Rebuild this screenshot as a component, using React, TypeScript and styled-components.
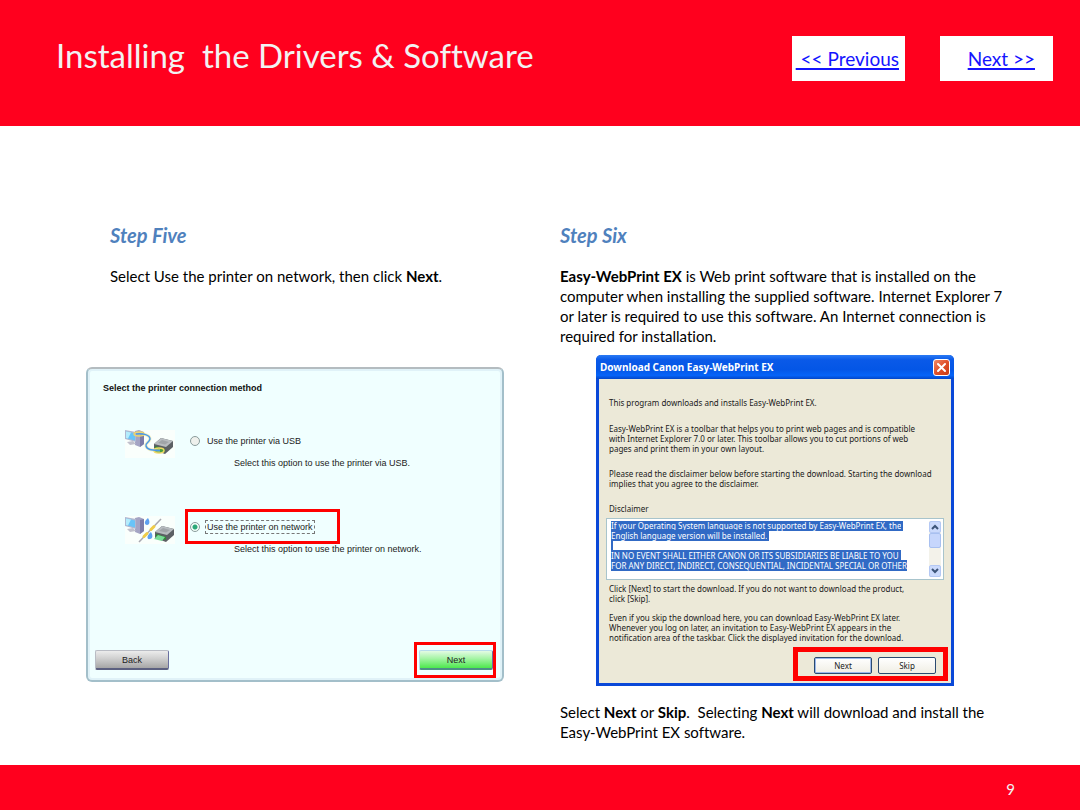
import React, { useEffect, useRef } from "react";
import styled, { createGlobalStyle } from "styled-components";

const Global = createGlobalStyle`
  *, *::before, *::after { box-sizing: border-box; }
  body { margin: 0; background: #fff; }
  h1, h2, h3, p { margin: 0; }
`;

const red = "#ff001e";
const slideFont = `Lato, "Open Sans", sans-serif`;
const wizardFont = `"Liberation Sans", Arial, sans-serif`;
const windowFont = `Tahoma, "Noto Sans", "DejaVu Sans Condensed", sans-serif`;

const Page = styled.div`
  display: flex;
  flex-direction: column;
  min-height: 100vh;
  font-family: ${slideFont};
  font-variant-ligatures: none;
  font-size: 15px;
  line-height: 20px;
  color: #000;
`;

const Header = styled.header`
  display: flex;
  align-items: flex-start;
  min-height: 126px;
  padding: 36px 27px 0 56px;
  background: ${red};
`;

const Title = styled.h1`
  flex: 1;
  font-size: 33px;
  line-height: 38px;
  font-weight: 400;
  white-space: pre;
  color: #f2f2f2;
`;

const Nav = styled.nav`
  display: flex;
  gap: 35px;
`;

const NavLink = styled.a<{ $inset: number }>`
  width: 113px;
  padding: 11px ${(p) => p.$inset}px 10px 0;
  background: #fff;
  color: #1414ff;
  font-size: 19px;
  line-height: 24px;
  text-align: right;
  white-space: pre;
  text-decoration-thickness: 2px;
  text-underline-offset: 2px;
`;

const Main = styled.main`
  flex: 1;
  display: grid;
  grid-template-columns: 1fr 1fr;
  gap: 10px;
  padding: 97px 56px 22px 86px;
`;

const Step = styled.section<{ $indent?: number }>`
  & > h2, & > p { padding-left: ${(p) => p.$indent ?? 0}px; }
`;

const StepTitle = styled.h2`
  margin-bottom: 19px;
  font-size: 20px;
  line-height: 24px;
  font-weight: 700;
  font-style: italic;
  color: #4f81bd;
`;

const Copy = styled.p`
  white-space: pre-line;
`;

const Caption = styled(Copy)`
  margin-top: 16px;
`;

/* Printer set-up wizard */

const Wizard = styled.form`
  display: flex;
  flex-direction: column;
  max-width: 418px;
  min-height: 315px;
  margin-top: 81px;
  padding: 13px 6px 2px 7px;
  border: 2px solid #a3bfca;
  border-top-color: #b4bcc0;
  border-radius: 6px;
  background: #f0ffff;
  box-shadow: inset 0 0 0 2px #e0f2f8;
  font-family: ${wizardFont};
  font-size: 9px;
  line-height: 12px;
  color: #222;
`;

const WizardTitle = styled.h3`
  margin: 0 0 29px 8px;
  font-size: 9px;
  line-height: 12px;
  font-weight: 700;
  color: #111;
`;

const Option = styled.div`
  display: grid;
  grid-template-columns: 50px 1fr;
  column-gap: 10px;
  margin: 0 0 40px 30px;
  & > svg { align-self: end; }
`;

const Choice = styled.label<{ $marked?: boolean }>`
  display: flex;
  align-items: center;
  gap: 5px;
  justify-self: start;
  min-width: 155px;
  height: 35px;
  padding: 0 2px;
  border: 3px solid ${(p) => (p.$marked ? "#ff0000" : "transparent")};
`;

const ChoiceText = styled.span<{ $focused?: boolean }>`
  padding: 0 1px;
  border: 1px dashed ${(p) => (p.$focused ? "#777" : "transparent")};
`;

const Radio = styled.input`
  appearance: none;
  width: 10px;
  height: 10px;
  margin: 0;
  border: 1px solid #8a9c9c;
  border-radius: 50%;
  background: #eef0ec;
  &:checked {
    background: radial-gradient(circle, #2aa878 0 2px, #f4fffa 3px);
  }
`;

const Hint = styled.p`
  grid-column: 2;
  margin: -1px 0 0 49px;
`;

const WizardActions = styled.div`
  display: flex;
  align-items: center;
  justify-content: space-between;
  margin-top: auto;
`;

const WizardButton = styled.button<{ $green?: boolean }>`
  display: block;
  width: 74px;
  height: 20px;
  padding: 0;
  border: 1px solid ${(p) => (p.$green ? "#b8dcec" : "#b9bcc4")};
  border-right-color: #6a6fa0;
  border-bottom: 2px solid ${(p) => (p.$green ? "#4c8f86" : "#5c6080")};
  border-radius: 2px;
  background: ${(p) =>
    p.$green
      ? "linear-gradient(#e4fbe4, #a4f4a4 45%, #4de84d)"
      : "linear-gradient(#ececec, #cfcfcf 45%, #a6a6a6)"};
  font: 9px/12px ${wizardFont};
  color: #222;
`;

const NextMark = styled.div`
  padding: 5px 0 5px 2px;
  border: 3px solid #ff0000;
`;

/* Download window */

const Window = styled.section`
  max-width: 358px;
  margin: 9px 0 0 36px;
  border: solid #0a48d8;
  border-width: 0 3px 3px;
  border-radius: 5px 5px 0 0;
  background: #ece9d8;
  font-family: ${windowFont};
  font-size: 8px;
  line-height: 10px;
  color: #1a1a1a;
`;

const TitleBar = styled.header`
  display: flex;
  align-items: center;
  justify-content: space-between;
  height: 24px;
  margin: 0 -3px;
  padding: 0 4px;
  border-radius: 5px 5px 0 0;
  background: linear-gradient(#2a7af4, #0a5ae8 20%, #0456e6 60%, #0664f8 85%, #0346c8);
`;

const WindowTitle = styled.h3`
  font-size: 10px;
  line-height: 16px;
  font-weight: 700;
  color: #fff;
`;

const CloseButton = styled.button`
  display: grid;
  place-items: center;
  width: 17px;
  height: 17px;
  padding: 0;
  border: 1px solid #fff;
  border-radius: 3px;
  background: linear-gradient(135deg, #f08a68, #e0502a 50%, #c83c14);
`;

const WindowBody = styled.div`
  padding: 19px 7px 2px;
`;

const Note = styled.p<{ $gap: number }>`
  margin: 0 0 ${(p) => p.$gap}px 3px;
  white-space: pre;
`;

const DisclaimerLabel = styled.label`
  display: block;
  margin: 0 0 4px 3px;
`;

const DisclaimerBox = styled.div`
  display: flex;
  height: 62px;
  margin-bottom: 4px;
  padding: 2px;
  border: 1px solid #a8c4cc;
  background: #fff;
`;

const DisclaimerText = styled.textarea`
  flex: 1;
  min-width: 0;
  padding: 0 0 0 2px;
  border: 0;
  outline: 0;
  resize: none;
  overflow: hidden;
  background: transparent;
  font: 8px/10px ${windowFont};
  color: #1a1a1a;
  &::selection { background: #316ac5; color: #fff; }
`;

const ScrollBar = styled.div`
  display: flex;
  flex-direction: column;
  width: 12px;
  background: #f3f2ea;
`;

const ScrollButton = styled.button`
  display: grid;
  place-items: center;
  height: 12px;
  padding: 0;
  border: 1px solid #b4c8f4;
  border-radius: 2px;
  background: #cbdafc;
`;

const ScrollThumb = styled.div`
  height: 15px;
  margin-bottom: auto;
  border: 1px solid #a8c0f0;
  border-radius: 2px;
  background: #c6d6fc;
`;

const ActionMark = styled.div`
  display: flex;
  gap: 6px;
  width: 155px;
  margin: 4px -4px 0 auto;
  padding: 5px 7px 2px 16px;
  border: 5px solid #ff0000;
`;

const WindowButton = styled.button<{ $default?: boolean }>`
  width: 58px;
  height: 17px;
  padding: 0;
  border: 1px solid #2a4a70;
  border-radius: 2px;
  background: linear-gradient(#fff, #f0eee4);
  box-shadow: ${(p) => (p.$default ? "inset 0 0 0 1px #9ab8ec" : "none")};
  font: 8px/10px ${windowFont};
  color: #1a1a1a;
`;

function Computer() {
  return (
    <>
      <path d="M10 1 L14 0 L19 2 V14 L15 17 L10 15 Z" fill="#a4a4c4" />
      <path d="M15 3 L19 2 V14 L15 17 Z" fill="#7c7ca8" />
      <path d="M0 0 L11 2 V12 L0 9 Z" fill="#b0b8d0" />
      <path d="M1 1.5 L10 3.5 V10.5 L1 8 Z" fill="#68c4f8" />
      <path d="M1 1.5 L6 2.5 L3 8.5 L1 8 Z" fill="#b4ecfc" />
      <path d="M2 12 L8 11 L11 14 L5 15 Z" fill="#c0c0cc" />
    </>
  );
}

function Printer() {
  return (
    <>
      <path d="M29 14 L36 8 L48 11 V17 L40 24 L29 20 Z" fill="#5c6064" />
      <path d="M29 14 L36 8 L48 11 L41 17 Z" fill="#b8bcc0" />
      <path d="M33 13 L37 10 L44 12 L40 14.500 Z" fill="#a0a4a8" />
      <path d="M30 16 L40 19 V22 L30 18.500 Z" fill="#2c8c34" />
    </>
  );
}

function UsbPicture() {
  return (
    <svg width="50" height="28" viewBox="0 0 50 28" aria-hidden="true">
      <rect width="50" height="28" fill="#fafffc" />
      <Computer />
      <ellipse cx="14" cy="4" rx="5" ry="2" fill="none" stroke="#f0d468" strokeWidth="1.500" />
      <Printer />
      <ellipse cx="34" cy="20.500" rx="5" ry="2.500" fill="#48a040" stroke="#f0d868" strokeWidth="1.500" />
      <path d="M11 4 C18 3 25 5 25 9 C24 13 20 13 21 16 C22 20 27 20 35 20.500" fill="none" stroke="#f0e088" strokeWidth="3" opacity="0.500" />
      <path d="M11 4 C18 3 25 5 25 9 C24 13 20 13 21 16 C22 20 27 20 35 20.500" fill="none" stroke="#4a9ae8" strokeWidth="1.500" />
    </svg>
  );
}

function NetworkPicture() {
  return (
    <svg width="50" height="28" viewBox="0 0 50 28" aria-hidden="true">
      <rect width="50" height="28" fill="#fafffc" />
      <g transform="translate(0 1)">
        <Computer />
      </g>
      <path d="M36 3 L14 26" stroke="#a8a8b0" strokeWidth="1.500" />
      <path d="M29 10.500 L26 13.500 M22 17.500 L19 20.500" stroke="#f0cc48" strokeWidth="3" strokeLinecap="round" />
      <path d="M23 2 C18 6 20 9 22 9 C25 9 25 5 23 2 Z" fill="#5ca0f0" />
      <path d="M26 16 C21 20 22 24 25 23 C28 23 28 19 26 16 Z" fill="#5ca0f0" />
      <g transform="translate(1 2)">
        <Printer />
        <path d="M28 21 L32 17 L39 19 L36 23 Z" fill="#78dc98" />
      </g>
    </svg>
  );
}

const disclaimer = [
  "If your Operating System language is not supported by Easy-WebPrint EX, the",
  "English language version will be installed.",
  "",
  "IN NO EVENT SHALL EITHER CANON OR ITS SUBSIDIARIES BE LIABLE TO YOU",
  "FOR ANY DIRECT, INDIRECT, CONSEQUENTIAL, INCIDENTAL SPECIAL OR OTHER",
].join("\n");

const Foot = styled.footer`
  display: flex;
  justify-content: flex-end;
  min-height: 45px;
  padding: 14px 65px 0 0;
  background: ${red};
  color: #f2f2f2;
  font-size: 15px;
`;

function PrinterWizard() {
  return (
    <Wizard onSubmit={(e) => e.preventDefault()}>
      <WizardTitle>Select the printer connection method</WizardTitle>
      <Option>
        <UsbPicture />
        <Choice>
          <Radio type="radio" name="connection" value="usb" />
          <ChoiceText>Use the printer via USB</ChoiceText>
        </Choice>
        <Hint>Select this option to use the printer via USB.</Hint>
      </Option>
      <Option>
        <NetworkPicture />
        <Choice $marked>
          <Radio type="radio" name="connection" value="network" defaultChecked />
          <ChoiceText $focused>Use the printer on network</ChoiceText>
        </Choice>
        <Hint>Select this option to use the printer on network.</Hint>
      </Option>
      <WizardActions>
        <WizardButton type="button">Back</WizardButton>
        <NextMark>
          <WizardButton type="submit" $green>Next</WizardButton>
        </NextMark>
      </WizardActions>
    </Wizard>
  );
}

function DownloadWindow() {
  const text = useRef<HTMLTextAreaElement>(null);
  useEffect(() => {
    text.current?.focus({ preventScroll: true });
    text.current?.select();
  }, []);

  return (
    <Window>
      <TitleBar>
        <WindowTitle>Download Canon Easy-WebPrint EX</WindowTitle>
        <CloseButton type="button" aria-label="Close">
          <svg width="11" height="11" viewBox="0 0 11 11" aria-hidden="true">
            <path d="M2 2 L9 9 M9 2 L2 9" stroke="#fff" strokeWidth="2" strokeLinecap="round" />
          </svg>
        </CloseButton>
      </TitleBar>
      <WindowBody>
        <Note $gap={16}>This program downloads and installs Easy-WebPrint EX.</Note>
        <Note $gap={15}>
          {"Easy-WebPrint EX is a toolbar that helps you to print web pages and is compatible\nwith Internet Explorer 7.0 or later. This toolbar allows you to cut portions of web\npages and print them in your own layout."}
        </Note>
        <Note $gap={15}>
          {"Please read the disclaimer below before starting the download. Starting the download\nimplies that you agree to the disclaimer."}
        </Note>
        <DisclaimerLabel htmlFor="disclaimer">Disclaimer</DisclaimerLabel>
        <DisclaimerBox>
          <DisclaimerText id="disclaimer" ref={text} readOnly wrap="off" value={disclaimer} />
          <ScrollBar>
            <ScrollButton type="button" aria-label="Scroll up">
              <svg width="8" height="6" viewBox="0 0 8 6" aria-hidden="true">
                <path d="M1 5 L4 2 L7 5" fill="none" stroke="#3c5478" strokeWidth="2" />
              </svg>
            </ScrollButton>
            <ScrollThumb />
            <ScrollButton type="button" aria-label="Scroll down">
              <svg width="8" height="6" viewBox="0 0 8 6" aria-hidden="true">
                <path d="M1 1 L4 4 L7 1" fill="none" stroke="#3c5478" strokeWidth="2" />
              </svg>
            </ScrollButton>
          </ScrollBar>
        </DisclaimerBox>
        <Note $gap={9}>
          {"Click [Next] to start the download. If you do not want to download the product,\nclick [Skip]."}
        </Note>
        <Note $gap={4}>
          {"Even if you skip the download here, you can download Easy-WebPrint EX later.\nWhenever you log on later, an invitation to Easy-WebPrint EX appears in the\nnotification area of the taskbar. Click the displayed invitation for the download."}
        </Note>
        <ActionMark>
          <WindowButton type="button" $default>Next</WindowButton>
          <WindowButton type="button">Skip</WindowButton>
        </ActionMark>
      </WindowBody>
    </Window>
  );
}

export default function App() {
  return (
    <Page>
      <Global />
      <Header>
        <Title>{"Installing  the Drivers & Software"}</Title>
        <Nav>
          <NavLink href="#previous" $inset={6}>{" << Previous"}</NavLink>
          <NavLink href="#next" $inset={18}>{"Next >>"}</NavLink>
        </Nav>
      </Header>
      <Main>
        <Step $indent={24}>
          <StepTitle>Step Five</StepTitle>
          <Copy>Select Use the printer on network, then click <b>Next</b>.</Copy>
          <PrinterWizard />
        </Step>
        <Step>
          <StepTitle>Step Six</StepTitle>
          <Copy>
            <b>Easy-WebPrint EX</b>
            {" is Web print software that is installed on the\ncomputer when installing the supplied software. Internet Explorer 7\nor later is required to use this software. An Internet connection is\nrequired for installation."}
          </Copy>
          <DownloadWindow />
          <Caption>
            Select <b>Next</b> or <b>Skip</b>.&nbsp; Selecting <b>Next</b>
            {" will download and install the\nEasy-WebPrint EX software."}
          </Caption>
        </Step>
      </Main>
      <Foot>9</Foot>
    </Page>
  );
}
